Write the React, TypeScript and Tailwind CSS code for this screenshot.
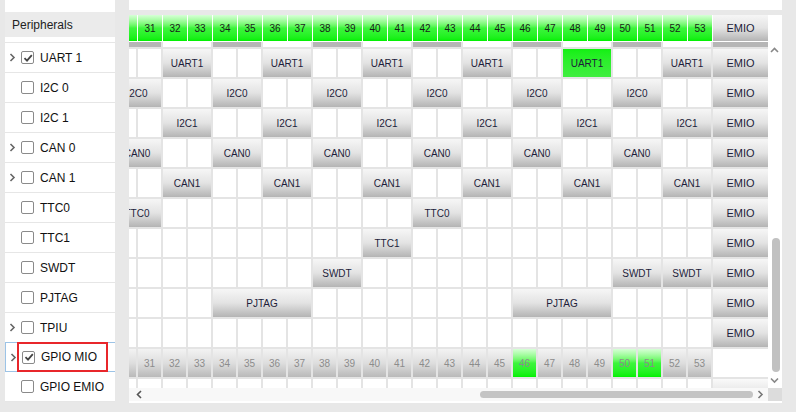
import React from 'react';

type Seg = { at: number; span: number; label: string; green?: boolean };

const pairs = (starts: number[], label: string, span = 2, green: number[] = []): Seg[] =>
  starts.map((s) => ({ at: s, span, label, green: green.includes(s) }));

const evenPairs = [32, 36, 40, 44, 48, 52];
const oddPairs = [30, 34, 38, 42, 46, 50];

const bodyRows: { segs: Seg[]; emio: boolean }[] = [
  { segs: pairs(evenPairs, 'UART1', 2, [48]), emio: true },
  { segs: pairs(oddPairs, 'I2C0'), emio: true },
  { segs: pairs(evenPairs, 'I2C1'), emio: true },
  { segs: pairs(oddPairs, 'CAN0'), emio: true },
  { segs: pairs(evenPairs, 'CAN1'), emio: true },
  { segs: pairs([30, 42], 'TTC0'), emio: true },
  { segs: pairs([40], 'TTC1'), emio: true },
  { segs: pairs([38, 50, 52], 'SWDT'), emio: true },
  { segs: pairs([34, 46], 'PJTAG', 4), emio: true },
  { segs: [], emio: true },
];

const pins = Array.from({ length: 24 }, (_, i) => 30 + i);
const bottomGreen = [46, 50, 51];

const items = [
  { label: 'UART 1', chev: true, checked: true },
  { label: 'I2C 0' },
  { label: 'I2C 1' },
  { label: 'CAN 0', chev: true },
  { label: 'CAN 1', chev: true },
  { label: 'TTC0' },
  { label: 'TTC1' },
  { label: 'SWDT' },
  { label: 'PJTAG' },
  { label: 'TPIU', chev: true },
  { label: 'GPIO MIO', chev: true, checked: true, selected: true },
  { label: 'GPIO EMIO' },
];

const grayBtn = 'bg-linear-to-b from-[#f6f6f6] via-[#e3e3e3] to-[#b4b4b4]';
const greenHead = 'bg-linear-to-b from-[#d6ffd6] via-[#3cf53c] to-[#00f000]';
const rowCols = 'grid grid-cols-[7px_repeat(23,23px)_55px] gap-x-[2px]';

const Chevron = ({ dir, color = '#777' }: { dir: 'up' | 'down' | 'left' | 'right'; color?: string }) => {
  const pts = {
    up: '1,5 4.5,1.5 8,5',
    down: '1,1.5 4.5,5 8,1.5',
    left: '5,1 1.5,4.5 5,8',
    right: '1.5,1 5,4.5 1.5,8',
  }[dir];
  const vertical = dir === 'up' || dir === 'down';
  return (
    <svg width={vertical ? 9 : 7} height={vertical ? 7 : 9} viewBox={vertical ? '0 0 9 7' : '0 0 7 9'}>
      <polyline points={pts} fill="none" stroke={color} strokeWidth="1.6" />
    </svg>
  );
};

const Cell = ({ seg }: { seg: Seg }) => {
  const partial = seg.at === 30;
  const span = seg.span === 4 ? 'col-span-4' : 'col-span-2';
  const bg = seg.green ? 'bg-linear-to-b from-[#12f012] to-[#40ee40]' : grayBtn;
  return (
    <div className={`${span} ${bg} overflow-hidden flex items-center`}>
      <div className={`${partial ? 'ml-[-16px] w-[48px] shrink-0' : 'w-full'} text-center text-[10px] text-[#1d1d3a]`}>
        {seg.label}
      </div>
    </div>
  );
};

const BodyRow = ({ segs, emio }: { segs: Seg[]; emio: boolean }) => {
  const cells: React.ReactNode[] = [];
  let skip = 0;
  pins.forEach((p) => {
    if (skip > 0) {
      skip--;
      return;
    }
    const seg = segs.find((s) => s.at === p);
    if (seg) {
      cells.push(<Cell key={p} seg={seg} />);
      skip = seg.span - 1;
    } else {
      cells.push(<div key={p} className="bg-white" />);
    }
  });
  return (
    <div className={`${rowCols} h-[28px]`}>
      {cells}
      {emio ? (
        <div className={`${grayBtn} flex items-center justify-center text-[11px] text-[#1d1d3a]`}>EMIO</div>
      ) : (
        <div className="bg-white" />
      )}
    </div>
  );
};

const Sidebar = () => (
  <div className="ml-[5px] w-[110px] h-[402px] bg-white pt-[12px] flex flex-col">
    <div className="h-[25px] bg-[#ebebeb] flex items-center pl-[7px] text-[12px] text-[#222]">Peripherals</div>
    <div className="h-[5px]" />
    <div className="border-t border-[#e6e6e6]">
      {items.map((it) => (
        <div
          key={it.label}
          className={`relative h-[30px] flex items-center border-b ${
            it.selected ? 'border-[#9cc3e6] border-t border-l -mt-px' : 'border-[#e6e6e6]'
          }`}
        >
          <div className="w-[16px] pl-[4px] flex items-center">
            {it.chev && <Chevron dir="right" color="#666" />}
          </div>
          <div className="w-[13px] h-[13px] rounded-[2px] border border-[#8a8a8a] bg-white flex items-center justify-center">
            {it.checked && (
              <svg width="10" height="10" viewBox="0 0 10 10">
                <polyline points="1.5,5.2 4,7.6 8.8,2.2" fill="none" stroke="#444" strokeWidth="1.8" />
              </svg>
            )}
          </div>
          <span className="ml-[6px] text-[12px] text-[#111]">{it.label}</span>
          {it.selected && (
            <div className="absolute left-[11px] top-[-1px] w-[91px] h-[30px] border-2 border-[#e8262b]" />
          )}
        </div>
      ))}
    </div>
  </div>
);

const Grid = () => (
  <div className="w-[639px] overflow-hidden">
    <div className="bg-white pb-px">
      <div className="grid grid-cols-[8px_repeat(23,24px)_55px] gap-x-px h-[26px]">
        {pins.map((p) => (
          <div key={p} className={`${greenHead} flex items-center justify-center text-[10px] text-[#1a1a1a]`}>
            {p > 30 ? p : ''}
          </div>
        ))}
        <div className={`${grayBtn} flex items-center justify-center text-[11px] text-[#1d1d3a]`}>EMIO</div>
      </div>
    </div>
    <div className="bg-[#e4e4e4] flex flex-col gap-y-[2px]">
      <div className={`${rowCols} h-[5px]`}>
        {pins.map((p) => {
          const idx = p - 30;
          if (idx % 2 === 1) return null;
          const gray = idx % 4 === 0;
          return <div key={p} className={`col-span-2 ${gray ? 'bg-[#b6b6b6]' : 'bg-white'}`} />;
        })}
        <div className="bg-[#b6b6b6]" />
      </div>
      {bodyRows.map((r, i) => (
        <BodyRow key={i} segs={r.segs} emio={r.emio} />
      ))}
      <div className={`${rowCols} h-[28px]`}>
        {pins.map((p) => (
          <div
            key={p}
            className={`${
              bottomGreen.includes(p) ? greenHead : 'bg-linear-to-b from-[#f3f3f3] via-[#dedede] to-[#b9b9b9]'
            } flex items-center justify-center text-[10px] text-[#8c8c8c]`}
          >
            {p > 30 ? p : ''}
          </div>
        ))}
        <div className="bg-white" />
      </div>
      <div className={`${rowCols} h-[9px]`}>
        {pins.map((p) => (
          <div key={p} className="bg-white" />
        ))}
        <div className="bg-linear-to-b from-[#fafafa] to-[#ececec]" />
      </div>
    </div>
  </div>
);

const VScroll = () => (
  <div className="w-[14px] flex flex-col">
    <div className="h-[27px]" />
    <div className="h-[16px] flex items-center justify-center pr-[1px]">
      <Chevron dir="up" color="#888" />
    </div>
    <div className="h-[180px]" />
    <div className="h-[134px] w-[8px] ml-[4px] rounded-full bg-[#c1c1c1]" />
    <div className="h-[16px] flex items-center justify-center pr-[1px]">
      <Chevron dir="down" color="#888" />
    </div>
  </div>
);

const HScroll = () => (
  <div className="flex h-[13px]">
    <div className="w-[639px] bg-[#f8f8f8] flex items-center">
      <div className="w-[17px] pl-[7px] flex items-center">
        <Chevron dir="left" color="#555" />
      </div>
      <div className="w-[334px]" />
      <div className="w-[273px] h-[7px] rounded-full bg-[#c4c4c4]" />
      <div className="w-[15px] flex items-center justify-center">
        <Chevron dir="right" color="#777" />
      </div>
    </div>
    <div className="w-[14px] bg-[#dcdcdc]" />
  </div>
);

export default function App() {
  return (
    <div className="w-[796px] h-[412px] bg-[#e8e8e8] flex font-['Liberation_Sans',Arial,sans-serif] overflow-hidden">
      <Sidebar />
      <div className="ml-[14px] w-[653px] flex flex-col">
        <div className="h-[10px] bg-white" />
        <div className="h-[5px]" />
        <div className="bg-white flex flex-col pb-[2px]">
          <div className="flex">
            <Grid />
            <VScroll />
          </div>
          <HScroll />
        </div>
      </div>
    </div>
  );
}
